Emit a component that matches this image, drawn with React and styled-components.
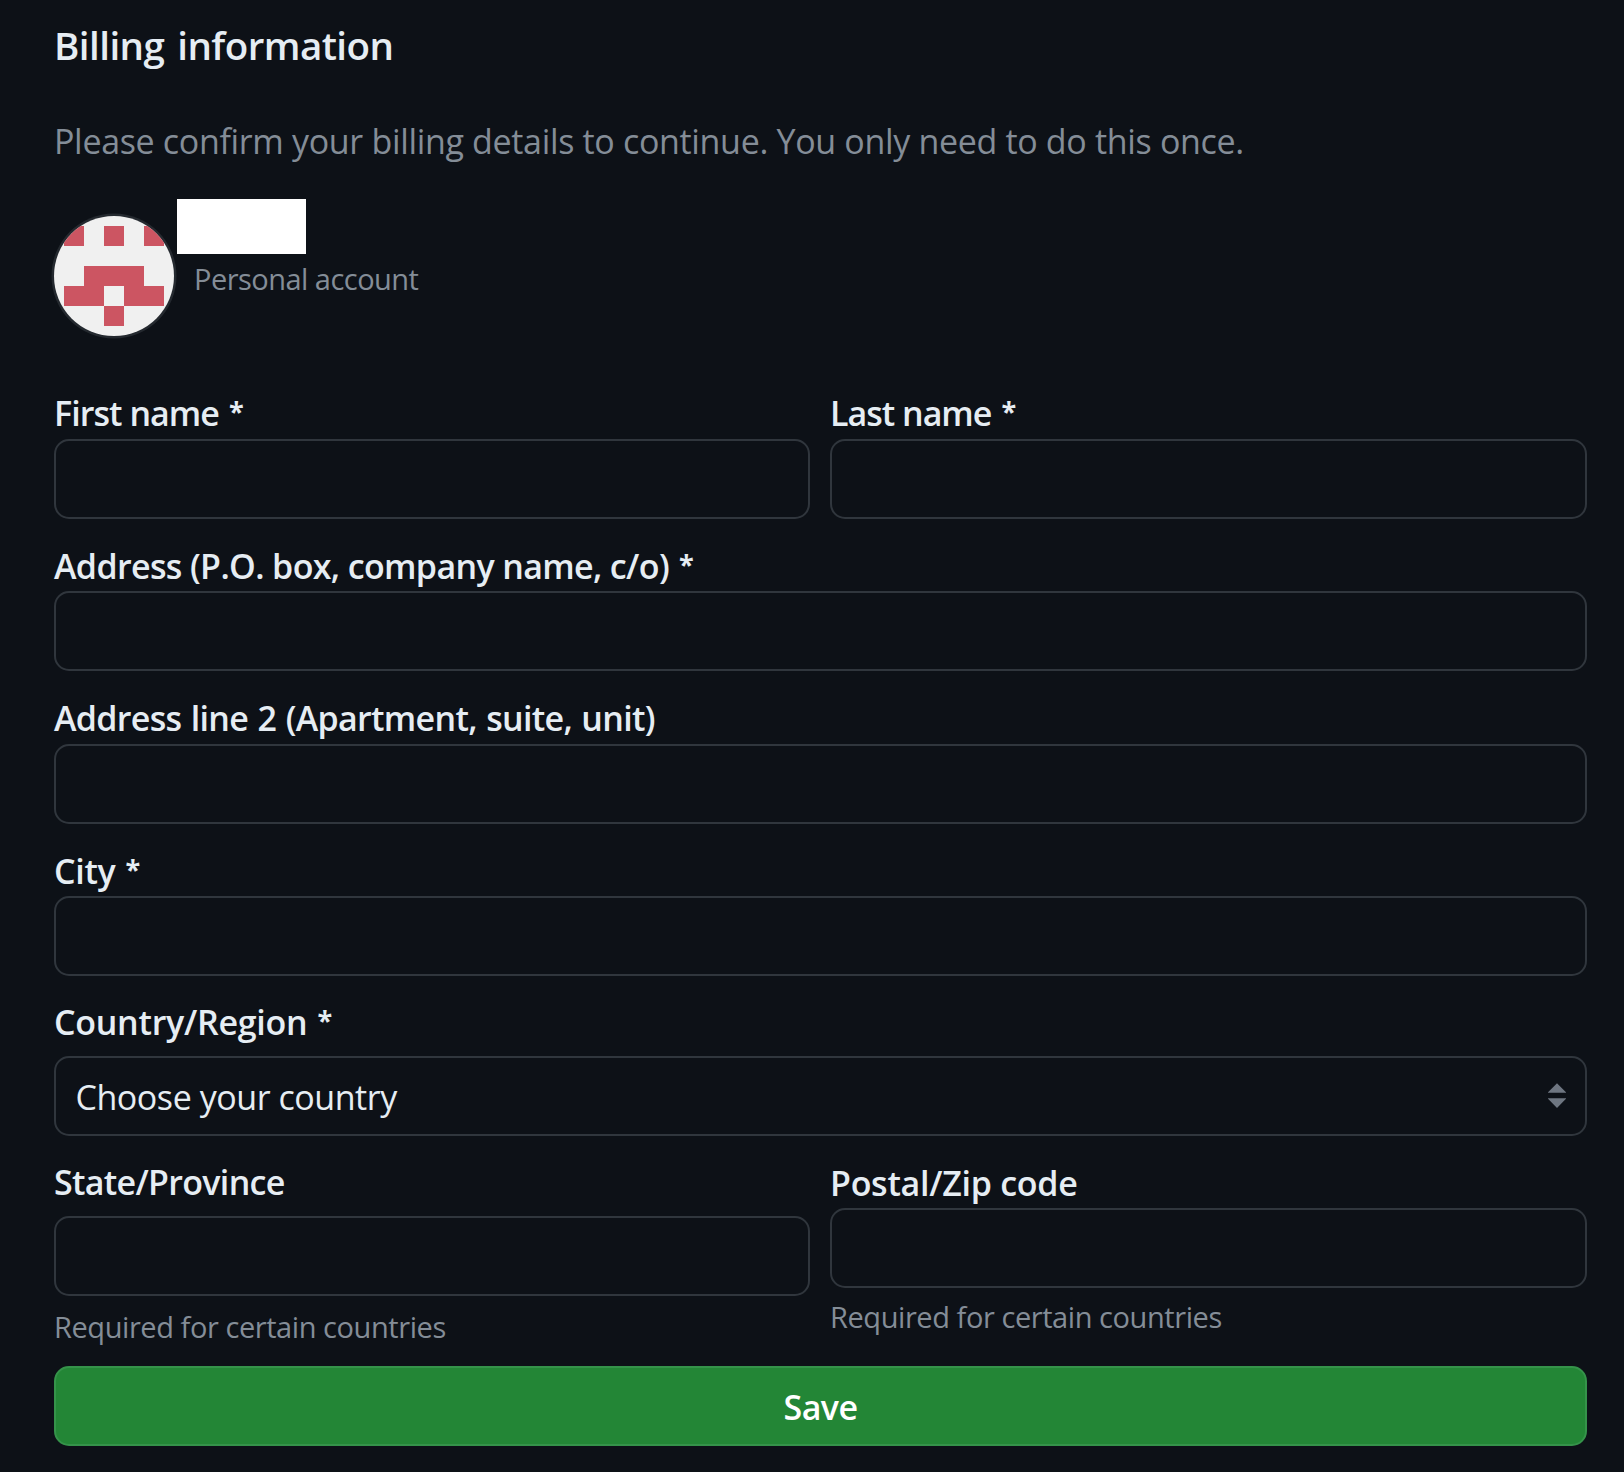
import React from "react";
import styled, { createGlobalStyle } from "styled-components";

const GlobalStyle = createGlobalStyle`
  *, *::before, *::after { box-sizing: border-box; }
  body {
    margin: 0;
    background: #0d1117;
    color: #e6edf3;
    font-family: "Open Sans", "Noto Sans", sans-serif;
  }
`;

const Page = styled.main`
  width: 1624px;
  height: 1472px;
  overflow: hidden;
  padding: 19px 37px 0 54px;
`;

const Title = styled.h2`
  margin: 0;
  height: 52px;
  line-height: 52px;
  font-size: 38.5px;
  font-weight: 600;
  letter-spacing: -0.55px;
  word-spacing: 3.5px;
  white-space: nowrap;
`;

const Intro = styled.p`
  margin: 44px 0 0;
  height: 52px;
  line-height: 52px;
  font-size: 34px;
  letter-spacing: -0.33px;
  color: #848d97;
  white-space: nowrap;
`;

const Account = styled.section`
  display: flex;
  align-items: flex-start;
  gap: 3px;
  height: 137px;
  margin-top: 32px;
`;

const Avatar = styled.svg`
  display: block;
  flex: none;
  width: 120px;
  height: 120px;
  margin-top: 17px;
  border-radius: 50%;
  background: #f0f0f0;
  box-shadow: 0 0 0 2.5px #24292f;
`;

const AccountText = styled.div`
  display: flex;
  flex-direction: column;
`;

const NameBlock = styled.div`
  width: 129px;
  height: 55px;
  background: #ffffff;
`;

const AccountKind = styled.span`
  padding-left: 17px;
  margin-top: 2px;
  line-height: 45px;
  font-size: 29px;
  letter-spacing: -0.53px;
  color: #848d97;
  white-space: nowrap;
`;

const Form = styled.form`
  display: flex;
  flex-direction: column;
  margin-top: 50px;
`;

const Row = styled.div`
  display: grid;
  grid-template-columns: 756px 757px;
  column-gap: 20px;
`;

const Field = styled.div`
  display: flex;
  flex-direction: column;
  align-items: stretch;
  padding-top: ${(p) => p.$before ?? 21}px;
`;

const Label = styled.label`
  height: 52px;
  line-height: 52px;
  margin-bottom: ${(p) => p.$after ?? -1}px;
  font-size: 34px;
  font-weight: 600;
  letter-spacing: ${(p) => p.$track ?? 0}px;
  word-spacing: ${(p) => p.$words ?? 0}px;
  white-space: nowrap;
`;

const Star = styled.span`
  margin-left: 10px;
  font-size: 27px;
  font-weight: 700;
  line-height: 1;
  letter-spacing: 0;
  vertical-align: 5px;
`;

const Input = styled.input`
  display: block;
  width: 100%;
  height: 80px;
  margin: 0;
  padding: 0 20px;
  border: 2px solid #30363d;
  border-radius: 15px;
  background: #0d1117;
  color: #e6edf3;
  font: inherit;
  font-size: 34px;
  outline: none;
`;

const Select = styled.button`
  display: flex;
  align-items: center;
  justify-content: space-between;
  height: 80px;
  padding: 2px 19px 0 19.5px;
  border: 2px solid #30363d;
  border-radius: 15px;
  background: #0d1117;
  color: #e6edf3;
  font: inherit;
  font-size: 34px;
  letter-spacing: -0.45px;
`;

const Arrows = styled.svg`
  display: block;
  flex: none;
  width: 18px;
  height: 26px;
  margin-bottom: 2px;
`;

const Hint = styled.span`
  height: 45px;
  line-height: 45px;
  margin-top: ${(p) => p.$before}px;
  font-size: 29px;
  letter-spacing: -0.43px;
  color: #848d97;
  white-space: nowrap;
`;

const SaveButton = styled.button`
  height: 80px;
  margin: 0;
  padding: 2px 0 0;
  border: 2px solid #35934a;
  border-radius: 15px;
  background: #238636;
  color: #ffffff;
  font: inherit;
  font-size: 34px;
  font-weight: 600;
  letter-spacing: -0.6px;
`;

const LastRow = styled(Row)`
  height: 230px;
`;

function TextField({ id, label, required, track, words, before, after, hint, hintBefore }) {
  return (
    <Field $before={before}>
      <Label htmlFor={id} $track={track} $words={words} $after={after}>
        {label}
        {required && <Star>*</Star>}
      </Label>
      <Input id={id} />
      {hint && <Hint $before={hintBefore}>{hint}</Hint>}
    </Field>
  );
}

export default function App() {
  return (
    <>
      <GlobalStyle />
      <Page>
        <Title>Billing information</Title>
        <Intro>Please confirm your billing details to continue. You only need to do this once.</Intro>
        <Account>
          <Avatar viewBox="0 0 120 120" shapeRendering="crispEdges" aria-hidden="true">
            <path
              fill="#cc5562"
              d="M10 10h20v20H10zM50 10h20v20H50zM90 10h20v20H90zM30 50h60v20H30zM10 70h40v20H10zM70 70h40v20H70zM50 90h20v20H50z"
            />
          </Avatar>
          <AccountText>
            <NameBlock />
            <AccountKind>Personal account</AccountKind>
          </AccountText>
        </Account>
        <Form>
          <Row>
            <TextField id="first" label="First name" required track={-0.95} before={1} after={0} />
            <TextField id="last" label="Last name" required track={-1} before={1} after={0} />
          </Row>
          <TextField id="address1" label="Address (P.O. box, company name, c/o)" required track={-0.63} />
          <TextField
            id="address2"
            label="Address line 2 (Apartment, suite, unit)"
            track={-0.68}
            words={1.2}
            after={0}
          />
          <TextField id="city" label="City" required track={-0.3} />
          <Field $before={20}>
            <Label htmlFor="country" $track={-0.26} $after={8}>
              Country/Region<Star>*</Star>
            </Label>
            <Select id="country" type="button">
              Choose your country
              <Arrows viewBox="0 0 18 26" aria-hidden="true">
                <path fill="#6e7681" d="M9 .2 18 9.2v.5H0v-.5zM0 15.3h18v.5L9 25 0 15.8z" />
              </Arrows>
            </Select>
          </Field>
          <LastRow>
            <TextField
              id="state"
              label="State/Province"
              track={-0.68}
              before={20}
              after={8}
              hint="Required for certain countries"
              hintBefore={8}
            />
            <TextField
              id="postal"
              label="Postal/Zip code"
              track={-0.27}
              hint="Required for certain countries"
              hintBefore={6}
            />
          </LastRow>
          <SaveButton type="button">Save</SaveButton>
        </Form>
      </Page>
    </>
  );
}
